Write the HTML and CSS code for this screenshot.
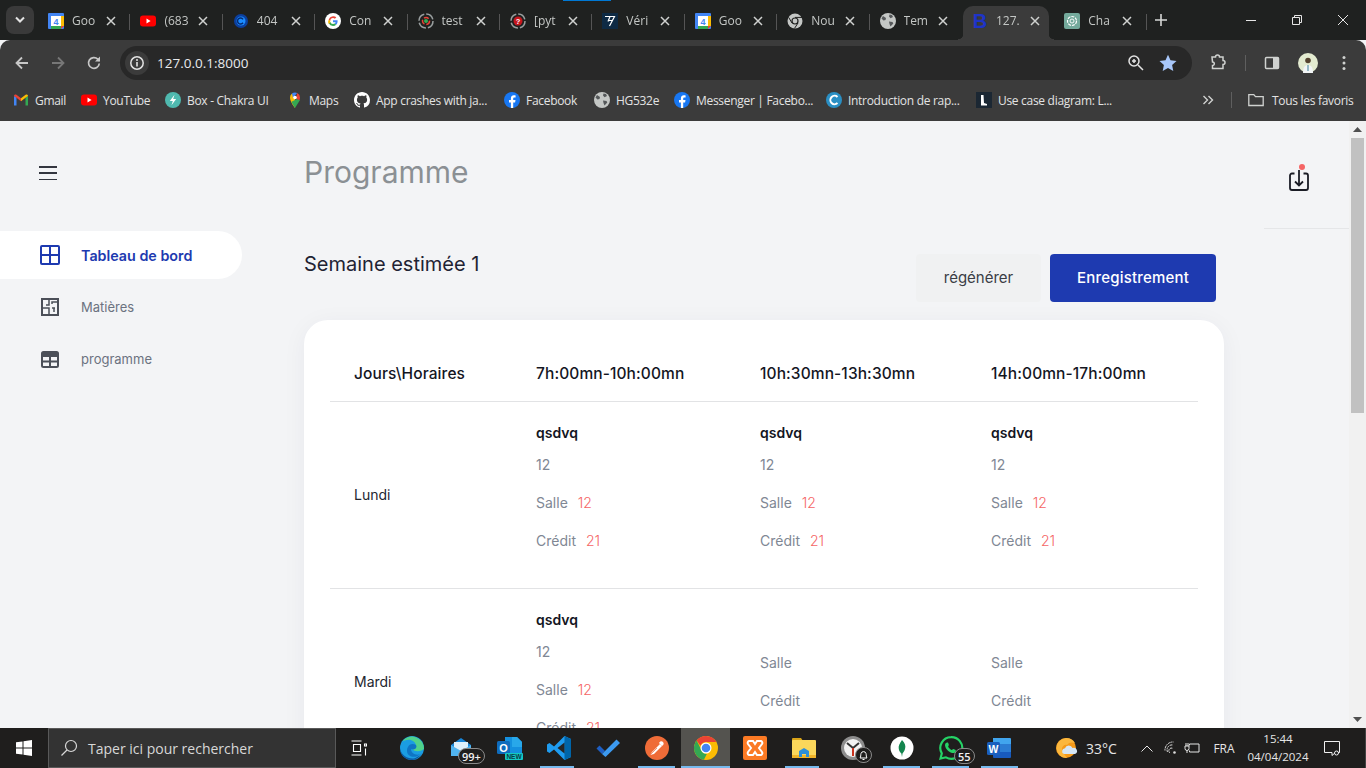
FILE: index.html
```html
<!DOCTYPE html>
<html lang="fr">
<head>
    <meta charset="utf-8">
    <title>Programme</title>
    <link rel="stylesheet" href="styles.css">
</head>
<body>
<svg class="sprites" width="0" height="0" aria-hidden="true">
    <symbol id="i-cal" viewBox="0 0 16 16">
        <rect width="16" height="16" rx="1" fill="#4285f4"/>
        <rect x="3" y="3" width="10" height="10" fill="#fff"/>
        <path d="M3 13h10v3H3z" fill="#34a853"/>
        <path d="M13 3h3v10h-3z" fill="#fbbc04"/>
        <path d="M13 13h3l-3 3z" fill="#ea4335"/>
    </symbol>
    <symbol id="i-yt" viewBox="0 0 16 16">
        <rect y="2.500" width="16" height="11" rx="3" fill="#f00"/>
        <path d="M6.500 5.600 10.600 8l-4.100 2.400z" fill="#fff"/>
    </symbol>
    <symbol id="i-fb" viewBox="0 0 16 16">
        <circle cx="8" cy="8" r="8" fill="#1877f2"/>
        <path d="M6.900 16V10.400H5V8h1.900V6.300c0-2 1.200-3 3-3 .8 0 1.500.1 1.700.1v2.100h-1.200c-.9 0-1.200.5-1.200 1.200V8h2.300l-.4 2.400H9.200V16z" fill="#fff"/>
    </symbol>
    <symbol id="i-globe" viewBox="0 0 16 16">
        <circle cx="8" cy="8" r="8" fill="#c4c7c5"/>
        <path d="M3 3 6 5 5.500 7 3.500 7.500 1.500 5.500zM9.500 1.500l2.500.6 1 2-2.500 1.200L9 3.500zM9 8.500l3.500.5.8 1.500-2.800 3-1-2.500z" fill="#55585a"/>
    </symbol>
    <symbol id="i-close" viewBox="0 0 10 10">
        <path d="M1 1l8 8M9 1 1 9" stroke="#d0d2d0" stroke-width="1.500" fill="none"/>
    </symbol>
    <symbol id="i-spiral" viewBox="0 0 16 16">
        <circle cx="8" cy="8" r="7" fill="none" stroke="#9aa0a0" stroke-width="1.500" stroke-dasharray="9 2"/>
    </symbol>
</svg>

<div class="tabstrip">
    <span class="load-bar"></span>
    <button class="tab-search">
        <svg width="12" height="8" viewBox="0 0 12 8"><path d="M2 1.500 6 5.500l4-4" stroke="#e3e3e3" stroke-width="2" fill="none"/></svg>
    </button>
    <div class="tab">
        <svg class="favicon" viewBox="0 0 16 16"><use href="#i-cal" width="16" height="16"/><text x="8" y="11.600" text-anchor="middle" class="svg-bold" font-size="9" fill="#4285f4">4</text></svg>
        <span class="tab-title">Goo</span>
        <svg class="tab-close"><use href="#i-close"/></svg>
    </div>
    <div class="tab">
        <svg class="favicon"><use href="#i-yt"/></svg>
        <span class="tab-title">(683</span>
        <svg class="tab-close"><use href="#i-close"/></svg>
    </div>
    <div class="tab">
        <svg class="favicon" viewBox="0 0 16 16"><circle cx="8" cy="8" r="7" fill="#0b3f9e"/><circle cx="8" cy="8" r="4.500" fill="#1a8cff"/><path d="M10 6.300a3 3 0 1 0 0 3.400" stroke="#052a70" stroke-width="1.500" fill="none"/></svg>
        <span class="tab-title">404</span>
        <svg class="tab-close"><use href="#i-close"/></svg>
    </div>
    <div class="tab">
        <svg class="favicon" viewBox="0 0 16 16"><circle cx="8" cy="8" r="8" fill="#fff"/><path d="M12.600 8.300c0-.3 0-.7-.1-1H8v1.900h2.600a2.300 2.300 0 0 1-1 1.400l1.600 1.200c.9-.9 1.400-2.100 1.400-3.500z" fill="#4285f4"/><path d="M8 13c1.300 0 2.400-.4 3.200-1.200l-1.600-1.200c-.4.300-1 .5-1.600.5a2.800 2.800 0 0 1-2.700-2L3.700 10.300A5 5 0 0 0 8 13z" fill="#34a853"/><path d="M5.300 9.600a3 3 0 0 1 0-1.900L3.700 6.400a5 5 0 0 0 0 4.500z" fill="#fbbc04"/><path d="M8 5c.7 0 1.400.3 1.900.7l1.400-1.400A5 5 0 0 0 3.700 6.400l1.600 1.300A2.800 2.800 0 0 1 8 5z" fill="#ea4335"/></svg>
        <span class="tab-title">Con</span>
        <svg class="tab-close"><use href="#i-close"/></svg>
    </div>
    <div class="tab">
        <svg class="favicon" viewBox="0 0 16 16"><use href="#i-spiral" width="16" height="16"/><circle cx="8" cy="8" r="3.500" fill="none" stroke="#ea4335" stroke-width="1.500" stroke-dasharray="5 2"/><circle cx="8" cy="8" r="2" fill="#34a853"/></svg>
        <span class="tab-title">test</span>
        <svg class="tab-close"><use href="#i-close"/></svg>
    </div>
    <div class="tab">
        <svg class="favicon" viewBox="0 0 16 16"><use href="#i-spiral" width="16" height="16"/><circle cx="8" cy="8" r="4.500" fill="#c5161d"/><text x="8" y="10.800" text-anchor="middle" class="svg-bold" font-size="7.500" fill="#fff">?</text></svg>
        <span class="tab-title">[pyt</span>
        <svg class="tab-close"><use href="#i-close"/></svg>
    </div>
    <div class="tab">
        <svg class="favicon" viewBox="0 0 16 16"><rect width="16" height="16" fill="#0e2a44"/><path d="M3 3.500h9.500L7.500 13M8 3.500 6 8.500M11 7.500H7" stroke="#fff" stroke-width="1.200" fill="none"/></svg>
        <span class="tab-title">Véri</span>
        <svg class="tab-close"><use href="#i-close"/></svg>
    </div>
    <div class="tab">
        <svg class="favicon" viewBox="0 0 16 16"><use href="#i-cal" width="16" height="16"/><text x="8" y="11.600" text-anchor="middle" class="svg-bold" font-size="9" fill="#4285f4">4</text></svg>
        <span class="tab-title">Goo</span>
        <svg class="tab-close"><use href="#i-close"/></svg>
    </div>
    <div class="tab">
        <svg class="favicon" viewBox="0 0 16 16"><circle cx="8" cy="8" r="7.500" fill="#c4c7c5"/><circle cx="8" cy="8" r="3.600" fill="#202120"/><circle cx="8" cy="8" r="2.400" fill="#c4c7c5"/><path d="M8 4.400h7M5 10 1.600 4.300M11 10l-3.500 5.400" stroke="#202120" stroke-width="1"/></svg>
        <span class="tab-title">Nou</span>
        <svg class="tab-close"><use href="#i-close"/></svg>
    </div>
    <div class="tab tab-nosep">
        <svg class="favicon"><use href="#i-globe"/></svg>
        <span class="tab-title">Tem</span>
        <svg class="tab-close"><use href="#i-close"/></svg>
    </div>
    <div class="tab tab-active">
        <span class="favicon favicon-b">B</span>
        <span class="tab-title">127.</span>
        <svg class="tab-close"><use href="#i-close"/></svg>
    </div>
    <div class="tab">
        <svg class="favicon" viewBox="0 0 16 16"><rect width="16" height="16" rx="2" fill="#74aa9c"/><circle cx="8" cy="8" r="4.500" fill="none" stroke="#fff" stroke-width="1.200" stroke-dasharray="3 1"/><circle cx="8" cy="8" r="2" fill="none" stroke="#fff" stroke-width=".9"/></svg>
        <span class="tab-title">Cha</span>
        <svg class="tab-close"><use href="#i-close"/></svg>
    </div>
    <button class="new-tab">
        <svg width="14" height="14" viewBox="0 0 14 14"><path d="M7 1v12M1 7h12" stroke="#d6d8d6" stroke-width="1.600"/></svg>
    </button>
    <div class="win-controls">
        <span class="win-btn"><svg width="12" height="12" viewBox="0 0 12 12"><path d="M1 6.500h10" stroke="#e6e6e6"/></svg></span>
        <span class="win-btn"><svg width="12" height="12" viewBox="0 0 12 12"><path d="M1.500 3.500h7v7h-7zM3.500 3.500v-2h7v7h-2" stroke="#e6e6e6" fill="none"/></svg></span>
        <span class="win-btn"><svg width="12" height="12" viewBox="0 0 12 12"><path d="M1 1l10 10M11 1 1 11" stroke="#e6e6e6" fill="none"/></svg></span>
    </div>
</div>

<div class="toolbar">
    <span class="tool nav-tool"><svg width="16" height="16" viewBox="0 0 16 16"><path d="M14 8H3M8 2.500 2.500 8 8 13.500" stroke="#c7c7c7" stroke-width="1.800" fill="none"/></svg></span>
    <span class="tool nav-tool"><svg width="16" height="16" viewBox="0 0 16 16"><path d="M2 8h11M8 2.500 13.500 8 8 13.500" stroke="#777" stroke-width="1.800" fill="none"/></svg></span>
    <span class="tool nav-tool"><svg width="16" height="16" viewBox="0 0 16 16"><path d="M13.300 8.500a5.400 5.400 0 1 1-1.500-4.300L13.500 6" stroke="#c7c7c7" stroke-width="1.700" fill="none"/><path d="M14 1.500V6.500H9z" fill="#c7c7c7"/></svg></span>
    <div class="address">
        <span class="site-info"><svg width="16" height="16" viewBox="0 0 16 16"><circle cx="8" cy="8" r="6.200" stroke="#e3e3e3" stroke-width="1.500" fill="none"/><path d="M8 7v4.500" stroke="#e3e3e3" stroke-width="1.600"/><circle cx="8" cy="4.900" r="1" fill="#e3e3e3"/></svg></span>
        <span class="url">127.0.0.1:8000</span>
        <span class="addr-icon"><svg width="18" height="18" viewBox="0 0 18 18"><circle cx="7" cy="7" r="5" stroke="#e3e3e3" stroke-width="1.500" fill="none"/><path d="M11 11l5 5M5 7h4M7 5v4" stroke="#e3e3e3" stroke-width="1.500"/></svg></span>
        <span class="addr-icon"><svg width="18" height="18" viewBox="0 0 18 18"><path d="M9 .8l2.500 5.500 6 .7-4.400 4.100 1.200 5.900L9 14.100l-5.300 2.900 1.200-5.900L.5 7l6-.7z" fill="#a8c7fa"/></svg></span>
    </div>
    <span class="tool puzzle-tool"><svg width="18" height="18" viewBox="0 0 18 18"><path d="M2 4.500h3.500a2 2 0 0 1 4 0H13V8a2 2 0 0 1 0 4v4H2.500v-3a1.800 1.800 0 0 0 0-3.600z" transform="translate(1 -1.500)" stroke="#d0d2d0" stroke-width="1.500" fill="none"/></svg></span>
    <span class="tool-sep"></span>
    <span class="tool panel-tool"><svg width="16" height="16" viewBox="0 0 16 16"><rect x="1.500" y="2.500" width="13" height="11" rx="1" stroke="#d0d2d0" stroke-width="1.500" fill="none"/><rect x="9" y="2.500" width="5.500" height="11" fill="#d0d2d0"/></svg></span>
    <span class="tool"><span class="avatar"><svg width="20" height="20" viewBox="0 0 20 20"><circle cx="10" cy="10" r="10" fill="#e3ebd0"/><circle cx="10" cy="7.500" r="2.800" fill="#54432f"/><path d="M5 20c0-6 2-8 5-8s5 2 5 8z" fill="#f3f6f7"/><path d="M9.500 12h1v6h-1z" fill="#3a7f96"/></svg></span></span>
    <span class="tool"><svg width="4" height="16" viewBox="0 0 4 16"><circle cx="2" cy="2.500" r="1.500" fill="#d0d2d0"/><circle cx="2" cy="8" r="1.500" fill="#d0d2d0"/><circle cx="2" cy="13.500" r="1.500" fill="#d0d2d0"/></svg></span>
</div>

<div class="bookmarks">
    <div class="bookmark">
        <svg class="favicon" viewBox="0 0 16 16"><path d="M1 13.500V4l2.500 1.500v8z" fill="#4285f4"/><path d="M12.500 13.500v-8L15 4v9.500z" fill="#34a853"/><path d="M1 4c0-1.300 1.400-1.900 2.400-1.200L8 6.200l-.1 3L3.500 5.700 1 4z" fill="#ea4335"/><path d="M8 6.200l4.600-3.400C13.600 2.100 15 2.700 15 4l-2.500 1.700L8 9.200z" fill="#fbbc04"/></svg>
        <span>Gmail</span>
    </div>
    <div class="bookmark"><svg class="favicon"><use href="#i-yt"/></svg><span>YouTube</span></div>
    <div class="bookmark">
        <svg class="favicon" viewBox="0 0 16 16"><circle cx="8" cy="8" r="8" fill="#4fb9af"/><path d="M9.500 2.800 4.800 9h3l-1.300 4.300L11.200 7h-3z" fill="#fff"/></svg>
        <span>Box - Chakra UI</span>
    </div>
    <div class="bookmark">
        <svg class="favicon" viewBox="0 0 16 16"><path d="M8 16S3 10 3 5.500a5 5 0 0 1 2-4l3 3.500z" fill="#fbbc04"/><path d="M8 16l5-8-3-1-5.500 2.800C5.800 13 8 16 8 16z" fill="#34a853"/><path d="M5 1.500A5 5 0 0 1 8 .5c.8 0 1.500.2 2.200.5L6 6z" fill="#4285f4"/><path d="M10.200 1A5 5 0 0 1 13 5.500c0 .9-.2 1.800-.6 2.700L8.900 6.500z" fill="#ea4335"/><circle cx="8" cy="5.500" r="1.800" fill="#fff"/></svg>
        <span>Maps</span>
    </div>
    <div class="bookmark">
        <svg class="favicon" viewBox="0 0 16 16"><path d="M8 0C3.580 0 0 3.580 0 8c0 3.540 2.290 6.530 5.470 7.590.4.070.55-.17.55-.38 0-.19-.01-.82-.01-1.490-2.010.37-2.530-.49-2.690-.94-.09-.23-.48-.94-.82-1.130-.28-.15-.68-.52-.01-.53.63-.01 1.080.58 1.230.82.720 1.210 1.870.87 2.330.66.070-.52.280-.87.510-1.070-1.780-.2-3.640-.89-3.640-3.950 0-.87.310-1.590.820-2.150-.08-.2-.36-1.020.08-2.120 0 0 .670-.21 2.200.82.640-.18 1.320-.27 2-.27.680 0 1.360.09 2 .27 1.530-1.040 2.200-.82 2.200-.82.440 1.100.160 1.920.080 2.120.510.560.820 1.270.820 2.150 0 3.070-1.870 3.750-3.650 3.950.290.250.540.730.540 1.480 0 1.070-.01 1.930-.01 2.200 0 .210.150.460.550.380A8.013 8.013 0 0016 8c0-4.420-3.580-8-8-8z" fill="#fff"/></svg>
        <span>App crashes with ja...</span>
    </div>
    <div class="bookmark"><svg class="favicon"><use href="#i-fb"/></svg><span>Facebook</span></div>
    <div class="bookmark"><svg class="favicon"><use href="#i-globe"/></svg><span>HG532e</span></div>
    <div class="bookmark"><svg class="favicon"><use href="#i-fb"/></svg><span>Messenger | Facebo...</span></div>
    <div class="bookmark">
        <svg class="favicon" viewBox="0 0 16 16"><circle cx="8" cy="8" r="8" fill="#2a8fc4"/><path d="M11.500 5a4.200 4.200 0 1 0 0 6" stroke="#fff" stroke-width="2" fill="none"/></svg>
        <span>Introduction de rap...</span>
    </div>
    <div class="bookmark">
        <svg class="favicon" viewBox="0 0 16 16"><rect width="16" height="16" fill="#1b2733"/><path d="M5 3h2.500l.5 8 3 1v1.500H5z" fill="#fff"/></svg>
        <span>Use case diagram: L...</span>
    </div>
    <span class="bm-more"><svg width="12" height="10" viewBox="0 0 12 10"><path d="M1.500 1l4 4-4 4M6.500 1l4 4-4 4" stroke="#d0d2d0" stroke-width="1.400" fill="none"/></svg></span>
    <span class="bm-sep"></span>
    <div class="bookmark bm-all">
        <svg class="favicon" viewBox="0 0 16 16"><path d="M.8 13.500V2.700h5l1.700 2h7.700v8.800z" stroke="#d0d2d0" stroke-width="1.300" fill="none"/></svg>
        <span>Tous les favoris</span>
    </div>
</div>

<div class="page">
    <aside class="sidebar">
        <button class="menu-btn" aria-label="menu">
            <span></span><span></span><span></span>
        </button>
        <nav class="side-nav">
            <a class="side-item side-item-active">
                <svg width="20" height="20" viewBox="0 0 20 20"><rect x="1" y="1" width="18" height="18" rx="1" fill="none" stroke="currentColor" stroke-width="2"/><path d="M10 1v18M1 10h18" stroke="currentColor" stroke-width="2"/></svg>
                <span>Tableau de bord</span>
            </a>
            <a class="side-item">
                <svg width="20" height="20" viewBox="0 0 20 20"><path d="M2 2h16v16H2z" fill="none" stroke="currentColor" stroke-width="2"/><path d="M9 2v6H6M2 11h7v7M12 7V5h6M12 11h3M18 11h-1M14 11v4" stroke="currentColor" stroke-width="1.500" fill="none"/></svg>
                <span>Matières</span>
            </a>
            <a class="side-item">
                <svg width="20" height="20" viewBox="0 0 20 20"><rect x="2" y="3" width="16" height="15" rx="1.500" fill="none" stroke="currentColor" stroke-width="2"/><path d="M2 4h16v4H2z" fill="currentColor"/><path d="M10 7v11M2 12.500h16" stroke="currentColor" stroke-width="2"/></svg>
                <span>programme</span>
            </a>
        </nav>
    </aside>

    <main class="content">
        <h1 class="page-title">Programme</h1>
        <div class="week-row">
            <h2 class="week-title">Semaine estimée 1</h2>
            <div class="week-actions">
                <button class="btn btn-light">régénérer</button>
                <button class="btn btn-primary">Enregistrement</button>
            </div>
        </div>
        <section class="card">
            <table class="schedule">
                <thead>
                    <tr>
                        <th class="col-day">Jours\Horaires</th>
                        <th class="col-slot1">7h:00mn-10h:00mn</th>
                        <th class="col-slot">10h:30mn-13h:30mn</th>
                        <th class="col-slot">14h:00mn-17h:00mn</th>
                    </tr>
                </thead>
                <tbody>
                    <tr>
                        <td class="day">Lundi</td>
                        <td>
                            <div class="slot">
                                <p class="subject">qsdvq</p>
                                <p class="hours">12</p>
                                <p class="info">Salle <span class="val">12</span></p>
                                <p class="info">Crédit <span class="val">21</span></p>
                            </div>
                        </td>
                        <td>
                            <div class="slot">
                                <p class="subject">qsdvq</p>
                                <p class="hours">12</p>
                                <p class="info">Salle <span class="val">12</span></p>
                                <p class="info">Crédit <span class="val">21</span></p>
                            </div>
                        </td>
                        <td>
                            <div class="slot">
                                <p class="subject">qsdvq</p>
                                <p class="hours">12</p>
                                <p class="info">Salle <span class="val">12</span></p>
                                <p class="info">Crédit <span class="val">21</span></p>
                            </div>
                        </td>
                    </tr>
                    <tr>
                        <td class="day">Mardi</td>
                        <td>
                            <div class="slot">
                                <p class="subject">qsdvq</p>
                                <p class="hours">12</p>
                                <p class="info">Salle <span class="val">12</span></p>
                                <p class="info">Crédit <span class="val">21</span></p>
                            </div>
                        </td>
                        <td>
                            <p class="info info-first">Salle</p>
                            <p class="info">Crédit</p>
                        </td>
                        <td>
                            <p class="info info-first">Salle</p>
                            <p class="info">Crédit</p>
                        </td>
                    </tr>
                </tbody>
            </table>
        </section>
    </main>

    <aside class="right-col">
        <div class="right-head">
            <svg width="24" height="30" viewBox="0 0 24 30"><path d="M7.500 9.500H5a2 2 0 0 0-2 2V24a2 2 0 0 0 2 2h14a2 2 0 0 0 2-2V11.500a2 2 0 0 0-2-2h-2.500" fill="none" stroke="#1a1c25" stroke-width="1.800"/><path d="M12 6v15M8 17.500l4 4 4-4" fill="none" stroke="#1a1c25" stroke-width="1.800"/><circle cx="15" cy="3" r="3" fill="#f56565"/></svg>
        </div>
    </aside>

    <div class="scrollbar">
        <span class="sb-arrow"><svg width="9" height="5" viewBox="0 0 9 5"><path d="M4.500 0 9 5H0z" fill="#505050"/></svg></span>
        <span class="sb-thumb"></span>
        <span class="sb-fill"></span>
        <span class="sb-arrow"><svg width="9" height="5" viewBox="0 0 9 5"><path d="M0 0h9L4.500 5z" fill="#505050"/></svg></span>
    </div>
</div>

<footer class="taskbar">
    <span class="start"><svg width="16" height="16" viewBox="0 0 16 16"><path d="M0 2.300 6.500 1.400V7.500H0zM7.500 1.200 16 0v7.500H7.500zM0 8.500h6.500v6.100L0 13.700zM7.500 8.500H16V16l-8.500-1.200z" fill="#fff"/></svg></span>
    <div class="search">
        <svg width="18" height="18" viewBox="0 0 18 18"><circle cx="11" cy="7" r="5.500" fill="none" stroke="#d8d8d8" stroke-width="1.200"/><path d="M7 11l-5.500 5.500" stroke="#d8d8d8" stroke-width="1.300"/></svg>
        <span>Taper ici pour rechercher</span>
    </div>
    <span class="task-view"><svg width="16" height="16" viewBox="0 0 16 16"><path d="M.5 1h10M.5 15h10M2.500 4.500h7v7h-7zM14 1v.1M14 4h1.500v2h-2V4zM14.500 8.500v7" stroke="#fff" stroke-width="1.100" fill="none"/></svg></span>
    <div class="task-apps">
        <span class="app">
            <svg width="24" height="24" viewBox="0 0 24 24"><circle cx="12" cy="12" r="12" fill="#1b9de2"/><path d="M24 13A12 12 0 0 0 2 6c3-3 12-4 14 3 1 3-2 5-4 4 3 3 8 3 12 0z" fill="#50d28a"/><path d="M12 24C5 24 0 19 0 12c1 9 12 13 17 9 2-1 4-2 5-4-2 4-6 7-10 7z" fill="#0c59a4"/><path d="M8 11c1-3 5-4 8-2 1 2 0 3-1 4-2 1-4 0-4 0 0 4 5 7 9 5-4 5-13 3-13-3 0-1 0-3 1-4z" fill="#0f75c4"/></svg>
        </span>
        <span class="app app-mail">
            <svg width="24" height="24" viewBox="0 0 24 24"><path d="M2 9 12 2l10 7v11H2z" fill="#1786d9"/><path d="M2 9l10 6 10-6v11H2z" fill="#50b4f0"/><path d="M5 6h14v5l-7 4-7-4z" fill="#dff1fc"/></svg>
            <span class="task-badge badge-mail">99+</span>
        </span>
        <span class="app">
            <svg width="26" height="24" viewBox="0 0 26 24"><path d="M8 1h12l5 5v11H8z" fill="#1490df"/><path d="M15 1h5l5 5v5H15z" fill="#28a8ea"/><rect y="5" width="13" height="13" rx="1.500" fill="#0f6cbd"/><text x="6.500" y="15.500" text-anchor="middle" class="svg-bold" font-size="11" fill="#fff">O</text><rect x="8" y="17" width="18" height="7" rx="1" fill="#13c9c4"/><text x="17" y="23" text-anchor="middle" class="svg-bold" font-size="6.500" fill="#0a3a48">NEW</text></svg>
        </span>
        <span class="app app-open app-split">
            <svg width="24" height="24" viewBox="0 0 24 24"><path d="M17.500 0 24 3v18l-6.500 3L7 13.500l-4.500 3.500L0 15.500v-7L2.500 7 7 10.500z" fill="#1f9cf0"/><path d="M17.500 0 24 3v18l-6.500 3z" fill="#0065a9"/><path d="M17.500 6.500 10.500 12l7 5.500z" fill="#252525"/></svg>
        </span>
        <span class="app">
            <svg width="24" height="18" viewBox="0 0 24 18"><path d="M.5 9.500 3.500 6.500 9 12l-3 3z" fill="#1e5fc4"/><path d="M6 15 20.500.5 24 4 9.500 18z" fill="#3c9af0"/></svg>
        </span>
        <span class="app app-open">
            <svg width="24" height="24" viewBox="0 0 24 24"><circle cx="12" cy="12" r="12" fill="#ef6c38"/><path d="M5 19l2-3 8-8 2 2-8 8z" fill="#fff"/><path d="M14 7c1-2 3-2 4-1s1 3-1 4z" fill="#fff"/><path d="M5 19l7-7" stroke="#ef6c38" stroke-width=".7"/></svg>
        </span>
        <span class="app app-active">
            <svg width="24" height="24" viewBox="0 0 24 24"><circle cx="12" cy="12" r="12" fill="#fbbc04"/><path d="M12 0a12 12 0 0 1 10.400 6H12a6 6 0 0 0-5.600 3.800L2.600 4.500A12 12 0 0 1 12 0z" fill="#ea4335"/><path d="M2.600 4.500 7.400 14a6 6 0 0 0 5.400 4L9.900 23.800A12 12 0 0 1 2.600 4.500z" fill="#34a853"/><circle cx="12" cy="12" r="5.500" fill="#fff"/><circle cx="12" cy="12" r="4.300" fill="#4285f4"/></svg>
        </span>
        <span class="app">
            <svg width="24" height="24" viewBox="0 0 24 24"><rect width="24" height="24" rx="2" fill="#fb7a24"/><path d="M6 5h4l2 3 2-3h4a2 2 0 0 1 1 3l-3 4 3 4a2 2 0 0 1-1 3h-4l-2-3-2 3H6a2 2 0 0 1-1-3l3-4-3-4a2 2 0 0 1 1-3z" fill="none" stroke="#fff" stroke-width="2"/></svg>
        </span>
        <span class="app app-open app-split">
            <svg width="24" height="22" viewBox="0 0 24 22"><path d="M0 2a1 1 0 0 1 1-1h8l2 3H0z" fill="#d9a418"/><rect y="3" width="24" height="18" rx="1" fill="#fbd75b"/><path d="M0 18h24v3H0z" fill="#f0b429"/><path d="M7 20v-6l5-3 5 3v6h-3v-3h-4v3z" fill="#2d8fd8"/></svg>
        </span>
        <span class="app app-clock">
            <svg width="24" height="24" viewBox="0 0 24 24"><circle cx="12" cy="12" r="12" fill="#8d8d8d"/><circle cx="12" cy="12" r="9" fill="#f2f2f2"/><path d="M12 12 6 7M12 12l6-5" stroke="#333" stroke-width="2"/><path d="M12 12v8" stroke="#c8321e" stroke-width="2"/></svg>
            <span class="task-badge badge-bell"><svg width="9" height="11" viewBox="0 0 9 11"><path d="M1 8c1-1 .5-3 1-4.500a2.600 2.600 0 0 1 5 0C7.500 5 7 7 8 8zM3.500 9.500h2" stroke="#fff" fill="none"/></svg></span>
        </span>
        <span class="app app-open">
            <svg width="24" height="24" viewBox="0 0 24 24"><circle cx="12" cy="12" r="11.500" fill="#fff"/><path d="M12 4c3 3 4 6 3 9-.5 2-2 3.500-2.500 4.500L12 21l-.6-3.500C10.500 16.500 9 15 8.800 13 8 10 10 7 12 4z" fill="#13854e"/></svg>
        </span>
        <span class="app app-open app-wa">
            <svg width="26" height="26" viewBox="0 0 24 24"><path d="M12 2a10 10 0 0 0-8.500 15L2.300 21.800l5-1.200A10 10 0 1 0 12 2z" fill="none" stroke="#25d366" stroke-width="2"/><path d="M8.500 7c1 0 1 .5 1.500 2 .3.800-1 1.300-.5 2 .8 1.300 2 2.300 3 2.800.7.300 1-1 1.800-.8 1.500.5 2.200.8 2.200 1.500 0 1.800-2 2.500-3.500 2-3.500-1-6-3.500-6.500-6.800C6.300 8 7.500 7 8.500 7z" fill="#25d366"/></svg>
            <span class="task-badge badge-wa">55</span>
        </span>
        <span class="app app-open">
            <svg width="25" height="23" viewBox="0 0 25 23"><path d="M6 1h17a1 1 0 0 1 1 1v5H6z" fill="#41a5ee"/><path d="M6 7h18v8H6z" fill="#2b7cd3"/><path d="M6 15h18v5a1 1 0 0 1-1 1H7a1 1 0 0 1-1-1z" fill="#185abd"/><rect y="5" width="13" height="13" rx="1.500" fill="#1a5fbe"/><text x="6.500" y="15.800" text-anchor="middle" class="svg-bold" font-size="10.500" fill="#fff">W</text></svg>
        </span>
    </div>
    <div class="weather">
        <svg width="22" height="22" viewBox="0 0 22 22"><circle cx="10" cy="11" r="10" fill="#f59a19"/><path d="M10 1a10 10 0 0 1 9 5c-3-1-6-1-8 2-2-1-5 1-5 4 0 3 2 5 5 9a10 10 0 0 1-1-20z" fill="#fbb73d"/><path d="M8 17a3 3 0 0 1 1-5.800A4 4 0 0 1 16.500 11 3 3 0 0 1 19 17z" fill="#d5e6f5"/></svg>
        <span>33°C</span>
    </div>
    <div class="tray">
        <span class="tray-cell"><svg width="12" height="7" viewBox="0 0 12 7"><path d="M.5 6.500 6 1l5.500 5.500" stroke="#e6e6e6" fill="none"/></svg></span>
        <span class="tray-cell"><svg width="14" height="14" viewBox="0 0 14 14"><path d="M1 9.500A8 8 0 0 1 9.500 1M3.500 11A5 5 0 0 1 9 4M6 12A2.500 2.500 0 0 1 9 7.500" stroke="#dcdcdc" fill="none" stroke-dasharray="2 .6"/><circle cx="10.500" cy="11.500" r="1.300" fill="#dcdcdc"/></svg></span>
        <span class="tray-cell tray-power"><svg width="16" height="14" viewBox="0 0 16 14"><path d="M5.500 3h9.500v8H5.500M5.500 3v1.500M5.500 11V9.500" stroke="#e6e6e6" fill="none"/><path d="M1 5h4v2.500a2 2 0 0 1-4 0zM2 5V2M4 5V2M3 9.500V12" stroke="#e6e6e6" fill="none"/></svg></span>
        <span class="tray-lang">FRA</span>
        <div class="clock">
            <span>15:44</span>
            <span>04/04/2024</span>
        </div>
        <span class="notif"><svg width="16" height="15" viewBox="0 0 16 15"><path d="M.5.500h15v11H11.500L8 14.500V11.500H.5z" stroke="#f0f0f0" fill="none"/><circle cx="12.500" cy="12" r="2" fill="#202020" stroke="#f0f0f0"/></svg></span>
    </div>
</footer>
</body>
</html>
```

FILE: styles.css
```css
* {
    box-sizing: border-box;
}

body {
    margin: 0;
    height: 100vh;
    display: flex;
    flex-direction: column;
    overflow: hidden;
    font-family: "Inter", "Liberation Sans", sans-serif;
    background: #f3f4f6;
}

button {
    border: 0;
    padding: 0;
    font-family: inherit;
    cursor: pointer;
}

.sprites {
    position: absolute;
}

.svg-bold {
    font-family: "Liberation Sans", sans-serif;
    font-weight: 700;
}

/* browser chrome */
.tabstrip {
    position: relative;
    height: 40px;
    flex: none;
    display: flex;
    align-items: flex-end;
    padding-left: 6px;
    background: #1f2120;
    font-family: "Open Sans", sans-serif;
    font-size: 12px;
    color: #c4c7c5;
}

.load-bar {
    position: absolute;
    top: 0;
    left: 563px;
    width: 48px;
    height: 1px;
    background: #0078d4;
}

.tab-search {
    width: 28px;
    height: 28px;
    margin: 0 4px 6px 0;
    border-radius: 8px;
    background: #3a3a3a;
    display: flex;
    align-items: center;
    justify-content: center;
}

.tab {
    position: relative;
    width: 92.4px;
    height: 34px;
    flex: none;
    display: flex;
    align-items: center;
    padding-left: 10px;
    padding-bottom: 5px;
}

.tab::after {
    content: "";
    position: absolute;
    right: 0;
    top: 8px;
    width: 1px;
    height: 16px;
    background: #555;
}

.tab-nosep::after {
    display: none;
}

.tab-active::before {
    content: "";
    position: absolute;
    top: 0;
    bottom: 0;
    left: 1px;
    right: 5px;
    border-radius: 10px 10px 0 0;
    background: #3b3b3b;
}

/* little flares at the foot of the active tab */
.tab-active::after {
    top: auto;
    bottom: 0;
    left: -4px;
    right: 0;
    width: auto;
    height: 6px;
    background:
        radial-gradient(circle at 0 0, transparent 5px, #3b3b3b 5.5px) 0 100% / 5px 6px no-repeat,
        radial-gradient(circle at 100% 0, transparent 5px, #3b3b3b 5.5px) 100% 100% / 5px 6px no-repeat;
}

.tab-active > * {
    position: relative;
}

.favicon {
    width: 16px;
    height: 16px;
    flex: none;
}

.favicon-b {
    font-family: "Liberation Sans", sans-serif;
    font-size: 20px;
    font-weight: 700;
    line-height: 16px;
    text-align: center;
    color: #1e34c8;
}

.tab-title {
    width: 34px;
    margin-left: 8px;
    overflow: hidden;
    white-space: nowrap;
    -webkit-mask-image: linear-gradient(to right, #000 68%, transparent);
    mask-image: linear-gradient(to right, #000 68%, transparent);
}

.tab-close {
    width: 10px;
    height: 10px;
    flex: none;
}

.new-tab {
    width: 14px;
    height: 14px;
    margin: 0 0 13px 7px;
    background: none;
    display: flex;
}

.win-controls {
    margin-left: auto;
    align-self: stretch;
    display: flex;
}

.win-btn {
    width: 46px;
    display: flex;
    align-items: center;
    justify-content: center;
}

.toolbar {
    height: 43px;
    flex: none;
    display: flex;
    align-items: center;
    padding: 6px 4px 3px;
    border-radius: 10px 10px 0 0;
    background: #3b3b3b;
}

.tool {
    width: 36px;
    height: 34px;
    flex: none;
    display: flex;
    align-items: center;
    justify-content: center;
}

.address {
    flex: 1;
    height: 34px;
    margin: 0 8px;
    padding: 0 15px 0 5px;
    display: flex;
    align-items: center;
    border-radius: 17px;
    background: #282828;
}

.site-info {
    width: 24px;
    height: 24px;
    flex: none;
    display: flex;
    align-items: center;
    justify-content: center;
    border-radius: 50%;
    background: #3b3b3b;
}

.url {
    flex: 1;
    margin-left: 8px;
    font-family: "Open Sans", sans-serif;
    font-size: 13.5px;
    color: #e8eaed;
}

.addr-icon {
    width: 18px;
    height: 18px;
    margin-left: 14px;
    display: flex;
}

.tool-sep {
    width: 1px;
    height: 16px;
    margin: 0 8px 0 9px;
    background: #5f5f5f;
}

.avatar {
    width: 20px;
    height: 20px;
    display: flex;
}

.bookmarks {
    height: 38px;
    flex: none;
    display: grid;
    grid-template-columns: 68px 84px 122px 67px 150px 90px 80px 152px 150px 226px 29px 17px auto;
    align-items: center;
    padding: 0 0 4px 13px;
    background: #3b3b3b;
    font-family: "Open Sans", sans-serif;
    font-size: 12px;
    letter-spacing: -.3px;
    color: #e3e3e3;
}

.bookmark {
    display: flex;
    align-items: center;
    gap: 6px;
    white-space: nowrap;
}

.bm-more {
    display: flex;
}

.bm-sep {
    width: 1px;
    height: 16px;
    background: #5f5f5f;
}

.bm-all {
    gap: 8px;
}

/* page */
.page {
    flex: 1;
    min-height: 0;
    display: flex;
    overflow: hidden;
    background: #f3f4f6;
}

.sidebar {
    width: 304px;
    flex: none;
    padding-top: 45px;
}

.menu-btn {
    display: flex;
    flex-direction: column;
    gap: 4.8px;
    width: 18px;
    margin-left: 39px;
    background: none;
}

.menu-btn span {
    height: 1.6px;
    background: #33363f;
}

.side-nav {
    margin-top: 51px;
    display: flex;
    flex-direction: column;
    gap: 4px;
}

.side-item {
    width: 242px;
    height: 48px;
    padding-left: 40px;
    display: flex;
    align-items: center;
    gap: 21px;
    border-radius: 0 24px 24px 0;
    font-size: 13px;
    color: #4b4f58;
}

.side-item span {
    color: #6b7280;
}

.side-item-active {
    background: #fff;
    color: #1e3ab0;
    font-size: 14.3px;
    font-weight: 600;
}

.side-item-active span {
    color: #1e3ab0;
}

.content {
    width: 920px;
    flex: none;
    padding-top: 31px;
}

.page-title {
    margin: 0;
    font-size: 30px;
    line-height: 40px;
    font-weight: 400;
    color: #8b9094;
}

.week-row {
    margin-top: 58px;
    padding-right: 8px;
    display: flex;
    justify-content: space-between;
    align-items: flex-start;
}

.week-title {
    margin: 0;
    font-size: 20px;
    line-height: 28px;
    font-weight: 400;
    color: #1f2333;
}

.week-actions {
    margin-top: 4px;
    display: flex;
    gap: 9px;
}

.btn {
    height: 48px;
    padding-bottom: 2px;
    border-radius: 4px;
    font-size: 15px;
}

.btn-light {
    width: 125px;
    background: #f0f1f2;
    color: #3a3d45;
}

.btn-primary {
    width: 166px;
    background: #1e3ab0;
    color: #fff;
    font-weight: 500;
    letter-spacing: .2px;
}

.card {
    margin-top: 18px;
    padding: 26px;
    border-radius: 24px;
    background: #fff;
    box-shadow: 0 4px 24px rgba(30, 40, 70, .05);
}

.schedule {
    width: 868px;
    table-layout: fixed;
    border-collapse: separate;
    border-spacing: 0;
    font-size: 14px;
}

.col-day {
    width: 182px;
}

.col-slot1 {
    width: 224px;
}

.schedule th {
    height: 56px;
    padding: 0 0 0 24px;
    text-align: left;
    font-size: 15.5px;
    font-weight: 500;
    letter-spacing: .1px;
    color: #14161f;
    border-bottom: 1px solid #e2e3e5;
}

.schedule td {
    padding: 21px 0 22px 24px;
    vertical-align: middle;
    border-bottom: 1px solid #e2e3e5;
}

.day {
    color: #23262f;
}

.slot {
    padding-bottom: 15px;
}

.slot p,
.schedule td > .info {
    margin: 0;
    line-height: 20px;
}

.subject {
    font-weight: 600;
    color: #14161f;
}

.hours {
    margin-top: 12px !important;
    color: #808794;
}

.info {
    margin-top: 18px !important;
    color: #808794;
}

.info-first {
    margin-top: 0 !important;
}

.val {
    margin-left: 6px;
    font-weight: 300;
    color: #f56565;
}

.right-col {
    width: 85px;
    margin-left: 40px;
    flex: none;
}

.right-head {
    height: 108px;
    padding: 43px 0 0 23px;
    border-bottom: 1px solid #e5e6e8;
}

.right-head svg {
    display: block;
}

.scrollbar {
    width: 17px;
    flex: none;
    display: flex;
    flex-direction: column;
    background: #f1f1f1;
}

.sb-arrow {
    height: 17px;
    flex: none;
    display: flex;
    align-items: center;
    justify-content: center;
}

.sb-thumb {
    height: 275px;
    margin: 0 2px;
    background: #c1c1c1;
}

.sb-fill {
    flex: 1;
}

/* windows taskbar */
.taskbar {
    height: 40px;
    flex: none;
    display: flex;
    align-items: stretch;
    background: #1f1e1d;
    font-family: "Open Sans", sans-serif;
    color: #e6e6e6;
}

.start {
    width: 48px;
    flex: none;
    display: flex;
    align-items: center;
    justify-content: center;
}

.search {
    width: 288px;
    flex: none;
    padding-left: 11px;
    display: flex;
    align-items: center;
    gap: 10px;
    border: 1px solid #595959;
    background: #333;
    font-size: 14px;
    color: #d8d8d8;
}

.task-view {
    width: 46px;
    flex: none;
    display: flex;
    align-items: center;
    justify-content: center;
}

.task-apps {
    margin-left: 5px;
    flex: none;
    display: flex;
}

.app {
    position: relative;
    width: 49px;
    display: flex;
    align-items: center;
    justify-content: center;
}

.app-open::after {
    content: "";
    position: absolute;
    left: 6px;
    right: 6px;
    bottom: 0;
    height: 2px;
    background: #76b9ed;
}

.app-split::after {
    right: 9px;
}

.app-active {
    background: #54534f;
}

.app-active::after {
    content: "";
    position: absolute;
    left: 0;
    right: 0;
    bottom: 0;
    height: 2px;
    background: #76b9ed;
}

.task-badge {
    position: absolute;
    top: 19px;
    height: 16px;
    min-width: 16px;
    padding: 0 3px;
    display: flex;
    align-items: center;
    justify-content: center;
    border: 1px solid #8a8a8a;
    border-radius: 8px;
    background: #1f1e1d;
    font-size: 11px;
    font-weight: 600;
    color: #f2f2f2;
}

.badge-mail {
    left: 22px;
    top: 20px;
}

.badge-bell {
    left: 27px;
    top: 19px;
}

.badge-wa {
    left: 28px;
    top: 20px;
}

.weather {
    width: 79px;
    flex: none;
    margin-left: 32px;
    display: flex;
    align-items: center;
    gap: 8px;
    font-size: 14px;
}

.tray {
    flex: none;
    display: flex;
    align-items: center;
    font-size: 11.5px;
}

.tray-cell {
    width: 24px;
    display: flex;
    align-items: center;
    justify-content: center;
}

.tray-power {
    width: 18px;
}

.tray-lang {
    width: 46px;
    text-align: center;
    font-size: 12px;
}

.clock {
    width: 62px;
    display: flex;
    flex-direction: column;
    align-items: center;
    gap: 2px;
    line-height: 16px;
}

.notif {
    width: 57px;
    height: 40px;
    padding-right: 11px;
    display: flex;
    align-items: center;
    justify-content: center;
    border-right: 1px solid #444;
}
```
